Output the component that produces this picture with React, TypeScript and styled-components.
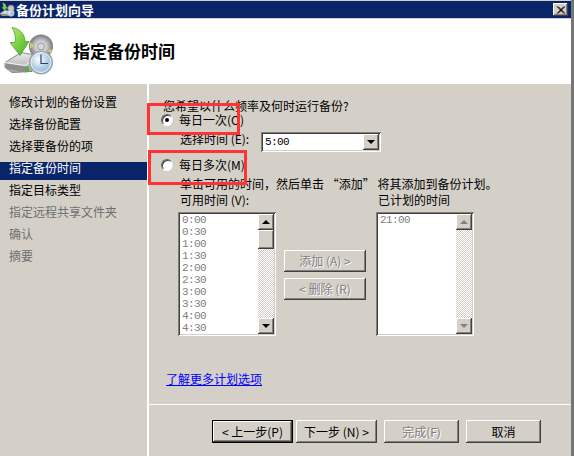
import React from 'react';
import styled, {createGlobalStyle} from 'styled-components';

const SIDEBAR_ITEMS = [
  {label: '修改计划的备份设置'},
  {label: '选择备份配置'},
  {label: '选择要备份的项'},
  {label: '指定备份时间', active: true},
  {label: '指定目标类型'},
  {label: '指定远程共享文件夹', disabled: true},
  {label: '确认', disabled: true},
  {label: '摘要', disabled: true},
];

const TIMES = ['0:00', '0:30', '1:00', '1:30', '2:00', '2:30', '3:00', '3:30', '4:00', '4:30'];

const BackupIcon = ({size}: {size: number}) => (
  <IconSvg $size={size} viewBox="4 27 54 51">
    <defs>
      <linearGradient id="arrowFill" x1="0" y1="0" x2="1" y2="1">
        <stop offset="0" stopColor="#bdf06c" />
        <stop offset="1" stopColor="#3cb01c" />
      </linearGradient>
      <linearGradient id="driveFill" x1="0" y1="0" x2="0" y2="1">
        <stop offset="0" stopColor="#ececec" />
        <stop offset="1" stopColor="#a4a4a4" />
      </linearGradient>
      <radialGradient id="discFill">
        <stop offset="0.2" stopColor="#f2f2f2" />
        <stop offset="0.7" stopColor="#a9a9ad" />
        <stop offset="1" stopColor="#77777c" />
      </radialGradient>
      <radialGradient id="faceFill" cx="0.4" cy="0.35">
        <stop offset="0" stopColor="#ffffff" />
        <stop offset="1" stopColor="#a9c6e4" />
      </radialGradient>
    </defs>
    <circle cx="41" cy="47" r="12" fill="url(#discFill)" />
    <circle cx="41" cy="47" r="3.5" fill="#d8d8d8" stroke="#777" strokeWidth="0.7" />
    <path d="M30 43l5 3-5 3z" fill="#b9d36a" />
    <path d="M48 51l4-1-1 4z" fill="#e3d36a" />
    <path d="M5 63 L21 53 L38 56 L33 66 L32 72 L12 73 L5 68 Z" fill="url(#driveFill)" stroke="#6f6f6f" strokeWidth="0.8" />
    <path d="M5 63 L25 66 L38 57" fill="none" stroke="#f4f4f4" strokeWidth="1" />
    <path d="M6 64 L26 67 L26 73 L6 69 Z" fill="#8d8d8d" />
    <rect x="26" y="67" width="3" height="5" fill="#4db52e" />
    <path d="M12 28 C20 29 25 35 25 42 L29 42 L20 56 L10 43 L15 43 C16 38 15 33 12 28 Z" fill="url(#arrowFill)" stroke="#3f9a22" strokeWidth="0.7" />
    <circle cx="41" cy="63" r="12" fill="#9aa6b0" />
    <circle cx="41" cy="63" r="10" fill="url(#faceFill)" stroke="#ffffff" strokeWidth="0.8" />
    <path d="M41 55 V64 H48" fill="none" stroke="#2b3f66" strokeWidth="1.2" />
  </IconSvg>
);

const ScrollBar = ({idle}: {idle?: boolean}) => (
  <ScrollTrack>
    <ScrollButton>
      <ArrowUp $idle={idle} />
    </ScrollButton>
    {!idle && <ScrollThumb />}
    <ScrollSpace />
    <ScrollButton>
      <ArrowDown $idle={idle} />
    </ScrollButton>
  </ScrollTrack>
);

const App = () => (
  <Wizard>
    <GlobalStyle />
    <TitleBar>
      <BackupIcon size={16} />
      <TitleText>备份计划向导</TitleText>
      <CloseButton>
        <svg width="9" height="8" viewBox="0 0 9 8">
          <path d="M1 0.5 L8 7.5 M2 0.5 L9 7.5 M8 0.5 L1 7.5 M9 0.5 L2 7.5" stroke="#000" strokeWidth="1" />
        </svg>
      </CloseButton>
    </TitleBar>

    <Header>
      <BackupIcon size={54} />
      <HeaderTitle>指定备份时间</HeaderTitle>
    </Header>

    <Body>
      <Sidebar>
        {SIDEBAR_ITEMS.map(item => (
          <SidebarItem key={item.label} $active={item.active} $disabled={item.disabled}>
            {item.label}
          </SidebarItem>
        ))}
      </Sidebar>

      <Main>
        <Content>
          <Question>您希望以什么频率及何时运行备份?</Question>

          <RadioRow $top={2}>
            <Radio $checked />
            每日一次(O)
          </RadioRow>
          <FieldRow>
            <FieldLabel>选择时间 (E):</FieldLabel>
            <Select>
              <SelectValue>5:00</SelectValue>
              <SelectButton>
                <ArrowDown />
              </SelectButton>
            </Select>
          </FieldRow>

          <RadioRow $top={7}>
            <Radio />
            每日多次(M)
          </RadioRow>
          <Hint>单击可用的时间，然后单击 “添加” 将其添加到备份计划。</Hint>

          <Lists>
            <ListColumn>
              <ListLabel>可用时间 (V):</ListLabel>
              <ListBox>
                <ListItems>
                  {TIMES.map(time => (
                    <ListItem key={time}>{time}</ListItem>
                  ))}
                </ListItems>
                <ScrollBar />
              </ListBox>
            </ListColumn>

            <MoveButtons>
              <Button $width={82} $height={22} disabled>
                添加 (A) &gt;
              </Button>
              <Button $width={82} $height={22} disabled>
                &lt; 删除 (R)
              </Button>
            </MoveButtons>

            <ListColumn>
              <ListLabel>已计划的时间</ListLabel>
              <ListBox>
                <ListItems>
                  <ListItem>21:00</ListItem>
                </ListItems>
                <ScrollBar idle />
              </ListBox>
            </ListColumn>
          </Lists>

          <MoreLink href="#">了解更多计划选项</MoreLink>
        </Content>

        <Separator />

        <Footer>
          <NavGroup>
            <Button $width={81} $height={23} $primary>
              &lt; 上一步(P)
            </Button>
            <Button $width={81} $height={23}>
              下一步 (N) &gt;
            </Button>
          </NavGroup>
          <Button $width={75} $height={23} disabled>
            完成(F)
          </Button>
          <Button $width={75} $height={23}>
            取消
          </Button>
        </Footer>
      </Main>
    </Body>

    <Annotation $left={147} $top={103} $width={93} $height={32} />
    <Annotation $left={148} $top={150} $width={99} $height={35} />
  </Wizard>
);

export default App;

const face = '#d4d0c8';
const navy = '#0a246a';
const raised = `inset -1px -1px 0 #404040, inset 1px 1px 0 #fff, inset -2px -2px 0 #808080`;
const sunken = `inset 1px 1px 0 #808080, inset -1px -1px 0 #fff, inset 2px 2px 0 #404040, inset -2px -2px 0 ${face}`;

const GlobalStyle = createGlobalStyle`
  html, body {
    margin: 0;
    padding: 0;
    background: ${face};
  }

  * {
    box-sizing: border-box;
  }
`;

const Wizard = styled.div`
  position: relative;
  display: flex;
  flex-direction: column;
  width: 574px;
  height: 456px;
  overflow: hidden;
  padding-top: 1px;
  border-right: 3px solid #767676;
  background: ${face};
  color: #000;
  font-family: 'Noto Sans CJK SC', 'Liberation Sans', sans-serif;
  font-size: 12px;
  line-height: 12px;
`;

const IconSvg = styled.svg<{$size: number}>`
  flex: none;
  width: ${p => p.$size}px;
  height: ${p => p.$size}px;
`;

const TitleBar = styled.div`
  display: flex;
  align-items: center;
  flex: none;
  height: 17px;
  background: ${navy};
`;

const TitleText = styled.div`
  color: #fff;
  font-size: 13px;
  font-weight: 700;
`;

const CloseButton = styled.div`
  display: flex;
  align-items: center;
  justify-content: center;
  width: 15px;
  height: 13px;
  margin-left: auto;
  margin-right: 3px;
  background: ${face};
  box-shadow: ${raised};
`;

const Header = styled.header`
  display: flex;
  align-items: center;
  flex: none;
  gap: 15px;
  height: 66px;
  padding-left: 4px;
  border-top: 1px solid ${face};
  background: #fff;
`;

const HeaderTitle = styled.h1`
  margin: 0 0 2px;
  font-size: 17px;
  line-height: 20px;
  font-weight: 700;
`;

const Body = styled.div`
  display: flex;
  flex: 1;
  min-height: 0;
`;

const Sidebar = styled.nav`
  display: flex;
  flex-direction: column;
  flex: none;
  gap: 4px;
  width: 149px;
  padding-top: 12px;
  border-right: 2px solid #fff;
`;

const SidebarItem = styled.div<{$active?: boolean; $disabled?: boolean}>`
  height: 18px;
  padding-left: 9px;
  background: ${p => (p.$active ? navy : 'transparent')};
  color: ${p => (p.$active ? '#fff' : p.$disabled ? '#6f6f6f' : '#000')};
`;

const Main = styled.main`
  display: flex;
  flex-direction: column;
  flex: 1;
  min-width: 0;
`;

const Content = styled.div`
  display: flex;
  flex-direction: column;
  align-items: flex-start;
  padding: 16px 0 0 14px;
`;

const Question = styled.div`
  height: 12px;
`;

const RadioRow = styled.label<{$top: number}>`
  display: flex;
  align-items: center;
  gap: 6px;
  height: 12px;
  margin: ${p => p.$top}px 0 0 -2px;
`;

const Radio = styled.span<{$checked?: boolean}>`
  display: flex;
  align-items: center;
  justify-content: center;
  width: 12px;
  height: 12px;
  border: 1px solid;
  border-color: #606060 #eee #fff #606060;
  border-radius: 50%;
  background: #fff;
  box-shadow: inset 1px 1px 0 #404040;

  &::after {
    content: '';
    display: ${p => (p.$checked ? 'block' : 'none')};
    width: 4px;
    height: 4px;
    border-radius: 50%;
    background: #000;
  }
`;

const FieldRow = styled.div`
  display: flex;
  align-items: flex-start;
  margin: 6px 0 0 17px;
`;

const FieldLabel = styled.span`
  width: 81px;
  padding-top: 1px;
  white-space: nowrap;
`;

const Select = styled.div`
  display: flex;
  align-items: center;
  justify-content: space-between;
  width: 120px;
  height: 20px;
  padding: 2px;
  background: #fff;
  box-shadow: ${sunken};
`;

const SelectValue = styled.span`
  padding-left: 2px;
  font-family: 'Liberation Mono', monospace;
  font-size: 11px;
  letter-spacing: -0.6px;
`;

const SelectButton = styled.div`
  display: flex;
  align-items: center;
  justify-content: center;
  width: 16px;
  height: 16px;
  background: ${face};
  box-shadow: ${raised};
`;

const Hint = styled.div`
  height: 12px;
  margin: 7px 0 0 17px;
  white-space: nowrap;
`;

const Lists = styled.div`
  display: flex;
  align-items: flex-start;
  margin: 4px 0 0 15px;
`;

const ListColumn = styled.div`
  display: flex;
  flex-direction: column;
  gap: 6px;
  width: 98px;
`;

const ListLabel = styled.div`
  height: 12px;
  padding-left: 2px;
  white-space: nowrap;
`;

const ListBox = styled.div`
  display: flex;
  justify-content: space-between;
  height: 124px;
  padding: 2px;
  background: #fff;
  box-shadow: ${sunken};
`;

const ListItems = styled.div`
  flex: 1;
  overflow: hidden;
  padding-left: 2px;
`;

const ListItem = styled.div`
  height: 12px;
  color: #808080;
  font-family: 'Liberation Mono', monospace;
  font-size: 11px;
  line-height: 12px;
  letter-spacing: -0.6px;
`;

const ScrollTrack = styled.div`
  display: flex;
  flex-direction: column;
  flex: none;
  width: 16px;
  background: repeating-conic-gradient(${face} 0 25%, #fff 0 50%) 0 0 / 2px 2px;
`;

const ScrollButton = styled.div`
  display: flex;
  align-items: center;
  justify-content: center;
  flex: none;
  width: 16px;
  height: 16px;
  background: ${face};
  box-shadow: ${raised};
`;

const ScrollThumb = styled.div`
  flex: none;
  height: 19px;
  background: ${face};
  box-shadow: ${raised};
`;

const ScrollSpace = styled.div`
  flex: 1;
`;

const ArrowUp = styled.span<{$idle?: boolean}>`
  width: 0;
  height: 0;
  border-left: 4px solid transparent;
  border-right: 4px solid transparent;
  border-bottom: 4px solid ${p => (p.$idle ? '#808080' : '#000')};
`;

const ArrowDown = styled.span<{$idle?: boolean}>`
  width: 0;
  height: 0;
  border-left: 4px solid transparent;
  border-right: 4px solid transparent;
  border-top: 4px solid ${p => (p.$idle ? '#808080' : '#000')};
`;

const MoveButtons = styled.div`
  display: flex;
  flex-direction: column;
  gap: 6px;
  margin: 56px 10px 0 8px;
`;

const Button = styled.button<{$width: number; $height: number; $primary?: boolean}>`
  display: flex;
  align-items: center;
  justify-content: center;
  flex: none;
  width: ${p => p.$width}px;
  height: ${p => p.$height}px;
  padding: 0;
  border: ${p => (p.$primary ? '1px solid #000' : 'none')};
  background: ${face};
  box-shadow: ${raised};
  color: #000;
  font: inherit;
  white-space: pre;

  &:disabled {
    color: #808080;
    text-shadow: 1px 1px 0 #fff;
  }
`;

const MoreLink = styled.a`
  height: 14px;
  margin: 37px 0 0 3px;
  color: #00f;
  text-decoration: underline;
`;

const Separator = styled.div`
  flex: none;
  height: 1px;
  margin-top: 17px;
  background: #fff;
`;

const Footer = styled.footer`
  display: flex;
  gap: 7px;
  padding: 15px 0 0 63px;
`;

const NavGroup = styled.div`
  display: flex;
  gap: 3px;
`;

const Annotation = styled.div<{$left: number; $top: number; $width: number; $height: number}>`
  position: absolute;
  left: ${p => p.$left}px;
  top: ${p => p.$top}px;
  width: ${p => p.$width}px;
  height: ${p => p.$height}px;
  border: 3px solid #f33;
  pointer-events: none;
`;
